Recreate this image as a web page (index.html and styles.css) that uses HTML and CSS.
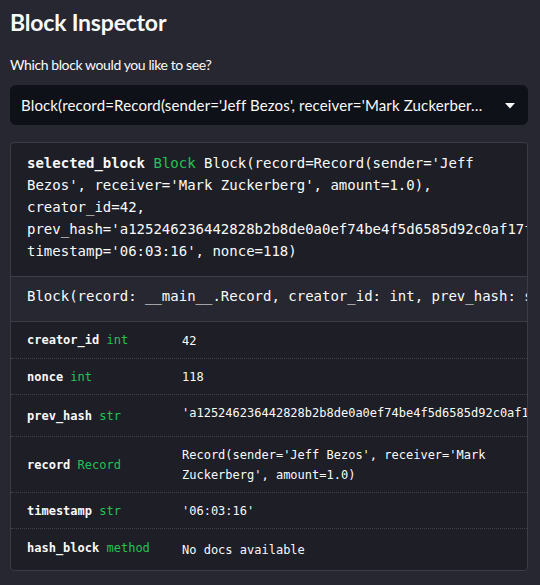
FILE: index.html
```html
<!DOCTYPE html>
<html>
<head>
<meta charset="utf-8">
<link rel="stylesheet" href="styles.css">
</head>
<body>
<div class="sidebar">
  <h1 class="title">Block Inspector</h1>
  <div class="label">Which block would you like to see?</div>
  <div class="select">
    <span class="select-text">Block(record=Record(sender='Jeff Bezos', receiver='Mark Zuckerber…</span>
    <svg class="caret" width="10" height="6" viewBox="0 0 10 6"><path d="M0 0H10L5 5.5Z" fill="#fafafa"/></svg>
  </div>
  <div class="help">
    <div class="help-summary">
      <div class="line"><span class="name">selected_block</span> <span class="type">Block</span> Block(record=Record(sender='Jeff</div>
      <div class="line">Bezos', receiver='Mark Zuckerberg', amount=1.0),</div>
      <div class="line">creator_id=42,</div>
      <div class="line">prev_hash='a125246236442828b2b8de0a0ef74be4f5d6585d92c0af17f3c9e1b7',</div>
      <div class="line">timestamp='06:03:16', nonce=118)</div>
    </div>
    <div class="help-sig">Block(record: __main__.Record, creator_id: int, prev_hash: str, timestamp: str, nonce: int)</div>
    <div class="members">
      <div class="row">
        <div class="key"><span class="kname">creator_id</span> <span class="type">int</span></div>
        <div class="val">42</div>
      </div>
      <div class="row">
        <div class="key"><span class="kname">nonce</span> <span class="type">int</span></div>
        <div class="val">118</div>
      </div>
      <div class="row">
        <div class="key"><span class="kname">prev_hash</span> <span class="type">str</span></div>
        <div class="val val-scroll">'a125246236442828b2b8de0a0ef74be4f5d6585d92c0af17f3c9e1b7'</div>
      </div>
      <div class="row">
        <div class="key"><span class="kname">record</span> <span class="type">Record</span></div>
        <div class="val">Record(sender='Jeff Bezos', receiver='Mark<br>Zuckerberg', amount=1.0)</div>
      </div>
      <div class="row">
        <div class="key"><span class="kname">timestamp</span> <span class="type">str</span></div>
        <div class="val">'06:03:16'</div>
      </div>
      <div class="row">
        <div class="key key-doc"><span class="kname">hash_block</span> <span class="type">method</span></div>
        <div class="val val-doc">No docs available</div>
      </div>
    </div>
  </div>
</div>
</body>
</html>
```
FILE: styles.css
```css
html, body {
  margin: 0;
  padding: 0;
  background: #262730;
  color: #fafafa;
  font-family: Lato, "Liberation Sans", sans-serif;
}

.sidebar {
  padding: 7px 12px 0 10px;
  display: flex;
  flex-direction: column;
}

.title {
  margin: 0;
  font-size: 23px;
  line-height: 30px;
  font-weight: 700;
  letter-spacing: -0.2px;
}

.label {
  margin-top: 18px;
  font-size: 14px;
  line-height: 20px;
  letter-spacing: -0.4px;
}

.select {
  margin-top: 10px;
  height: 40px;
  background: #0e1117;
  border-radius: 6px;
  display: flex;
  align-items: center;
  padding: 0 13px 0 11px;
  font-size: 15px;
  letter-spacing: 0.15px;
}

.select-text {
  flex: 1;
  white-space: nowrap;
  overflow: hidden;
}

.caret {
  display: block;
  margin-top: 2px;
}

.help {
  margin-top: 17px;
  background: #1d1e26;
  border: 1px solid #3b3c46;
  border-radius: 4px;
  overflow: hidden;
  font-family: "DejaVu Sans Mono", "Liberation Mono", monospace;
}

.help-summary {
  padding: 9px 16px 14px;
  font-size: 14px;
  line-height: 22px;
}

.line {
  white-space: pre;
}

.name, .kname {
  font-weight: 700;
}

.type {
  color: #21c354;
}

.help-sig {
  background: #262730;
  border-top: 1px solid #3b3c46;
  border-bottom: 1px solid #3b3c46;
  box-sizing: border-box;
  height: 46px;
  padding: 8px 16px 0;
  font-size: 14px;
  line-height: 22px;
  white-space: pre;
}

.row {
  display: grid;
  grid-template-columns: 155px 1fr;
  padding-left: 16px;
  font-size: 12px;
  line-height: 20px;
  border-top: 1px dotted #3f404a;
}

.row:first-child {
  border-top: none;
}

.row:first-child .val {
  padding-top: 9px;
}

.key {
  align-self: center;
  white-space: pre;
}

.val {
  padding: 8px 0 7px;
  white-space: pre;
}

.val-scroll {
  padding-bottom: 13px;
}

.key-doc {
  margin-bottom: 4px;
}

.val-doc {
  padding-top: 11px;
  padding-bottom: 10px;
}
```
